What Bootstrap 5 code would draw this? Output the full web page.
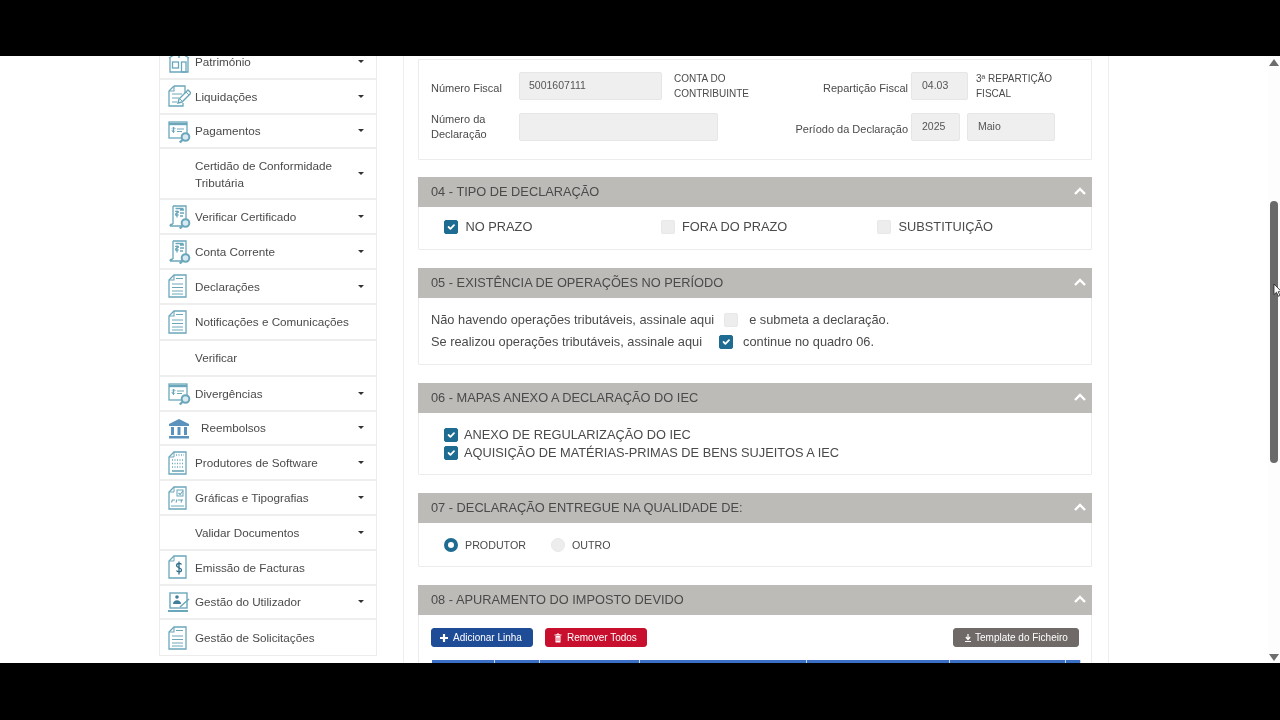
<!DOCTYPE html>
<html lang="pt">
<head>
<meta charset="utf-8">
<title>Declaração IEC</title>
<link href="https://cdn.jsdelivr.net/npm/bootstrap@5.3.0/dist/css/bootstrap.min.css" rel="stylesheet">
<style>
html,body{height:720px;overflow:hidden;background:#000}
body{font-family:"Liberation Sans",Arial,sans-serif;color:#4a4a4a;font-size:12.8px}
.bar{height:56px;background:#000}
.bar-b{height:57px;background:#000}
.page{height:607px;background:#fff;overflow:hidden;position:relative;filter:blur(.3px)}
.side{width:218px;margin-left:159px;margin-top:-11px;flex:none;border:1px solid #ececec;border-top:0;align-self:flex-start;border-radius:0}
.side .list-group-item{height:34.8px;padding:0 12px 0 7px;border:0;border-bottom:2px solid #eeeeee;font-size:11.7px;color:#4a4a4a;display:flex;align-items:center;line-height:17px;border-radius:0;background:#fff}
.side .list-group-item.mid{height:36px}
.side .list-group-item.tall{height:51px}
.side .list-group-item.last{border-bottom:0}
.ico{width:24px;height:24px;flex:none;margin-right:4px;color:#6ba7bb}
.ico.bank{color:#5c93bd}
.spc{width:24px;flex:none;margin-right:4px}
.ml6{margin-left:6px}
.side .dropdown-toggle{margin-left:auto;flex:none;color:#333;font-size:11.5px;line-height:0}
.side .dropdown-toggle::after{margin:0;display:block}
.panel{width:706px;margin-left:26px;flex:none;border-left:1px solid #eee;border-right:1px solid #eee;padding:3px 16px 0 14px;height:607px;overflow:hidden}
.sec{border:1px solid #ececec;border-radius:1px;margin-bottom:18px;background:#fff}
.sec-h{height:30px;background:#bdbbb8;padding:0 5px 0 13px;display:flex;align-items:center;justify-content:space-between;color:#4a4a4a;font-size:12.8px;margin:-1px -1px 0}
.chev{width:14px;height:9px;color:#fff;flex:none;margin-bottom:2px}
.top{height:101px;padding:11px 13px 0 12px;font-size:11px;line-height:15px;margin-bottom:17px}
.f-row{height:29px;margin-bottom:12px}
.lab1{width:88px;flex:none}
.pt6{padding-top:6px}
.fake{background:#efefef;border:1px solid #e6e6e6;border-radius:2px;height:28px;padding:0 9px;font-size:10.5px;color:#555;display:flex;align-items:center;min-height:0;box-shadow:none}
.w143{width:143px;flex:none}.w199{width:199px;flex:none}.w57{width:57px;flex:none;padding-left:10px}.w49{width:49px;flex:none;padding-left:10px}.w88{width:88px;flex:none;padding-left:10px}
.txt1{margin-left:12px;width:100px;flex:none;font-size:10px}
.lab-r1{width:134px;text-align:right;margin-right:3px;flex:none}
.lab-r2{width:190px;text-align:right;margin-right:3px;flex:none}
.txt2{margin-left:8px;width:92px;flex:none;font-size:10px}
.gap7{margin-left:7px}
.form-check-input.c{width:14px;height:14px;margin:0;flex:none;background-color:#ededed;border:1px solid #e8e8e8;border-radius:2px;opacity:1}
.form-check-input.c:checked{background-color:#1f6c92;border-color:#1f6c92}
.form-check-input.c[type=radio]{border-radius:50%}
.form-check-input.c[type=radio]:checked{background-image:none;background-color:#fff;border:4.5px solid #1f6c92}
.form-check-input.c.m-a{margin:0 11px 0 10px}
.form-check-input.c.m-b{margin:0 10px 0 17px}
.b04{height:42px;padding:0 0 2px 25px;display:flex;align-items:center}
.b04 .opt{width:216.500px;flex:none;display:flex;align-items:center;gap:7.500px}
.b05{height:66px;padding:11px 12px 0;line-height:22px}
.b05 .ln{display:flex;align-items:center;height:22px}
.b06{height:61px;padding:13px 0 0 25px;line-height:18px}
.b06 .ln{display:flex;align-items:center;height:18px;gap:6px}
.b07{height:43px;padding:2px 0 0 25px;display:flex;align-items:center;font-size:10.7px}
.b07 .opt{display:flex;align-items:center;gap:7px}
.b07 .opt+.opt{margin-left:25px}
.b08{padding:13px 12px 0 12px}
.btnx{height:19px;font-size:10px;padding:0 0 0 7px;line-height:17px;border-radius:3px;color:#fff;display:inline-flex;align-items:center;gap:4px;white-space:nowrap;--bs-btn-active-color:#fff}
.btn-a{background:#1f4c96;border:1px solid #1f4c96;width:102px}
.btn-r{background:#c8102e;border:1px solid #c8102e;width:102px;margin-left:12px}
.btn-t{background:#6f6a67;border:1px solid #6f6a67;width:126px;padding-left:9px;gap:2px}
.ib{width:10px;height:10px;flex:none}
.tbl{margin-top:13px;margin-left:1px;margin-bottom:0;table-layout:fixed;width:648px;--bs-table-bg:transparent}
.tbl th{background:#3b6fc6;height:30px;padding:0;border:0;border-right:1px solid #cfd9ee}
.c1{width:62px}.c2{width:45px}.c3{width:100px}.c4{width:167px}.c5{width:143px}.c6{width:116px}.c7{width:15px}
.sb{width:12px;height:607px;flex:none;margin-left:auto;background:#fdfdfd;display:flex;flex-direction:column;align-items:center}
.arr{width:10px;height:7px;color:#6d6d6d;flex:none}
.arr.up{margin-top:3px}
.thumb{width:8px;height:262px;background:#6a6a6a;border-radius:4px;margin-top:135px;flex:none}
.arr.dn{margin-top:auto;margin-bottom:2px}
.cursor{position:absolute;left:1273px;top:227px;width:9px;height:14px}
</style>
</head>
<body>
<svg width="0" height="0" class="d-block" aria-hidden="true">
<defs>
<g id="mag"><circle cx="18.500" cy="18" r="3.800" fill="#d9ebf2" stroke="currentColor" stroke-width="2"/><path d="M15.600 20.800l-2.800 2.800" stroke="currentColor" stroke-width="2.200"/></g>
<symbol id="i-house" viewBox="0 0 24 24"><path d="M2 9l10-6 10 6M3 9v14h18V9" fill="none" stroke="currentColor" stroke-width="1.300"/><rect x="5.500" y="13" width="6" height="6" fill="none" stroke="currentColor" stroke-width="1.300"/><rect x="14.500" y="13" width="4.500" height="10" fill="none" stroke="currentColor" stroke-width="1.300"/><circle cx="12" cy="8" r="1" fill="currentColor"/></symbol>
<symbol id="i-edit" viewBox="0 0 24 24"><path d="M7 2h11v9M7 2L2 7v15h14v-3" fill="none" stroke="currentColor" stroke-width="1.300"/><path d="M7 2v5H2M5 10h10M5 14h7M5 18h5" fill="none" stroke="currentColor" stroke-width="1.100"/><path d="M11 19l1-4 9-9 3 3-9 9z" fill="#fff" stroke="currentColor" stroke-width="1.400"/><path d="M19 8l3 3M13 15l2 2" stroke="currentColor" stroke-width="1"/></symbol>
<symbol id="i-pay" viewBox="0 0 24 24"><rect x="2" y="3" width="18" height="16" fill="none" stroke="currentColor" stroke-width="1.300"/><path d="M2 5h18" stroke="currentColor" stroke-width="2.400"/><path d="M5 9.500c0-1 3-1 3 0s-3 1-3 2.300 3 1 3 0M6.500 8v6M10 10h7M10 12.500h5" fill="none" stroke="currentColor" stroke-width="1"/><use href="#mag"/></symbol>
<symbol id="i-cert" viewBox="0 0 24 24"><path d="M6 1h13v14M6 1v18M3 21h12M6 19c-2 0-3 1-3 2" fill="none" stroke="currentColor" stroke-width="1.300"/><path d="M8.500 7c0-1 3-1 3 0s-3 1-3 2.500 3 1 3 0M10 5.500v7M13 5h4M13 8h4M13 11h3M8.500 3.500h8" fill="none" stroke="currentColor" stroke-width="1.300"/><use href="#mag"/></symbol>
<symbol id="i-doc" viewBox="0 0 24 24"><path d="M7 1h12v22H2V6z" fill="none" stroke="currentColor" stroke-width="1.300"/><path d="M7 1v5H2M9 4.500h7M5 10h11M5 13.500h11M5 17h11M5 20h11" fill="none" stroke="currentColor" stroke-width="1.100"/></symbol>
<symbol id="i-bank" viewBox="0 0 24 24"><path d="M12 3l10 5v2H2V8z" fill="currentColor"/><path d="M4 11h3v8H4zM10.500 11h3v8h-3zM17 11h3v8h-3zM2 20h20v2.500H2z" fill="currentColor"/></symbol>
<symbol id="i-soft" viewBox="0 0 24 24"><path d="M7 1h12v22H2V6z" fill="none" stroke="currentColor" stroke-width="1.300"/><path d="M7 1v5H2" fill="none" stroke="currentColor"/><path d="M9 4h8M5 9h12M5 12.500h12M5 16h12" fill="none" stroke="currentColor" stroke-width="1.400" stroke-dasharray="1 1.500"/><path d="M5 20h12" stroke="currentColor" stroke-width="1.600"/></symbol>
<symbol id="i-graf" viewBox="0 0 24 24"><path d="M7 1h12v22H2V6z" fill="none" stroke="currentColor" stroke-width="1.300"/><path d="M7 1v5H2" fill="none" stroke="currentColor"/><rect x="10" y="4" width="6" height="6" fill="none" stroke="currentColor"/><path d="M11.500 7l1.500 1.500 3-3.500M5 14h3M4.500 16.500l1-3M9 16.500l1-3M14 16.500l1-3M11 14h5M4 20h13" fill="none" stroke="currentColor" stroke-width="1.100"/></symbol>
<symbol id="i-fact" viewBox="0 0 24 24"><path d="M7 1h12v22H2V6z" fill="none" stroke="currentColor" stroke-width="1.300"/><path d="M7 1v5H2" fill="none" stroke="currentColor"/><path d="M14.500 9.500c-1-1.500-5-1.500-5 1s5 2 5 4.500-4 2.500-5 .5M12 6.500v13" fill="none" stroke="#2d6c88" stroke-width="1.300"/></symbol>
<symbol id="i-user" viewBox="0 0 24 24"><rect x="3" y="3" width="17" height="15" fill="none" stroke="currentColor" stroke-width="1.400"/><path d="M1 21h20" stroke="currentColor" stroke-width="2"/><circle cx="10" cy="7" r="1.800" fill="#3f7f9c"/><path d="M6 14c0-5 8-5 8 0z" fill="#3f7f9c"/><path d="M13 17l9-8" stroke="currentColor" stroke-width="1.500"/></symbol>
</defs>
</svg>
<div class="bar"></div>
<div class="page d-flex">
  <div class="side list-group">
    <div class="list-group-item"><svg class="ico"><use href="#i-house"/></svg><span>Património</span><span class="dropdown-toggle"></span></div>
    <div class="list-group-item"><svg class="ico"><use href="#i-edit"/></svg><span>Liquidações</span><span class="dropdown-toggle"></span></div>
    <div class="list-group-item"><svg class="ico"><use href="#i-pay"/></svg><span>Pagamentos</span><span class="dropdown-toggle"></span></div>
    <div class="list-group-item tall"><span class="spc"></span><span>Certidão de Conformidade<br>Tributária</span><span class="dropdown-toggle"></span></div>
    <div class="list-group-item"><svg class="ico"><use href="#i-cert"/></svg><span>Verificar Certificado</span><span class="dropdown-toggle"></span></div>
    <div class="list-group-item"><svg class="ico"><use href="#i-cert"/></svg><span>Conta Corrente</span><span class="dropdown-toggle"></span></div>
    <div class="list-group-item"><svg class="ico"><use href="#i-doc"/></svg><span>Declarações</span><span class="dropdown-toggle"></span></div>
    <div class="list-group-item mid"><svg class="ico"><use href="#i-doc"/></svg><span>Notificações e Comunicações</span></div>
    <div class="list-group-item mid"><span class="spc"></span><span>Verificar</span></div>
    <div class="list-group-item"><svg class="ico"><use href="#i-pay"/></svg><span>Divergências</span><span class="dropdown-toggle"></span></div>
    <div class="list-group-item"><svg class="ico bank"><use href="#i-bank"/></svg><span class="ml6">Reembolsos</span><span class="dropdown-toggle"></span></div>
    <div class="list-group-item"><svg class="ico"><use href="#i-soft"/></svg><span>Produtores de Software</span><span class="dropdown-toggle"></span></div>
    <div class="list-group-item"><svg class="ico"><use href="#i-graf"/></svg><span>Gráficas e Tipografias</span><span class="dropdown-toggle"></span></div>
    <div class="list-group-item"><span class="spc"></span><span>Validar Documentos</span><span class="dropdown-toggle"></span></div>
    <div class="list-group-item"><svg class="ico"><use href="#i-fact"/></svg><span>Emissão de Facturas</span></div>
    <div class="list-group-item"><svg class="ico"><use href="#i-user"/></svg><span>Gestão do Utilizador</span><span class="dropdown-toggle"></span></div>
    <div class="list-group-item last"><svg class="ico"><use href="#i-doc"/></svg><span>Gestão de Solicitações</span></div>
  </div>

  <div class="panel">
    <div class="sec top">
      <div class="d-flex align-items-center f-row">
        <span class="lab1 pt6">Número Fiscal</span>
        <div class="fake w143">5001607111</div>
        <span class="txt1">CONTA DO CONTRIBUINTE</span>
        <span class="lab-r1 pt6">Repartição Fiscal</span>
        <div class="fake w57">04.03</div>
        <span class="txt2">3ª REPARTIÇÃO FISCAL</span>
      </div>
      <div class="d-flex align-items-center f-row">
        <span class="lab1">Número da Declaração</span>
        <div class="fake w199"></div>
        <span class="lab-r2 pt6">Período da Declaração</span>
        <div class="fake w49">2025</div>
        <div class="fake w88 gap7">Maio</div>
      </div>
    </div>

    <div class="sec">
      <div class="sec-h"><span>04 - TIPO DE DECLARAÇÃO</span><svg class="chev" viewBox="0 0 14 9"><path d="M2 7l5-5 5 5" fill="none" stroke="currentColor" stroke-width="2.400"/></svg></div>
      <div class="b04">
        <label class="opt"><input class="form-check-input c" type="checkbox" checked> NO PRAZO</label>
        <label class="opt"><input class="form-check-input c" type="checkbox"> FORA DO PRAZO</label>
        <label class="opt"><input class="form-check-input c" type="checkbox"> SUBSTITUIÇÃO</label>
      </div>
    </div>

    <div class="sec">
      <div class="sec-h"><span>05 - EXISTÊNCIA DE OPERAÇÕES NO PERÍODO</span><svg class="chev" viewBox="0 0 14 9"><path d="M2 7l5-5 5 5" fill="none" stroke="currentColor" stroke-width="2.400"/></svg></div>
      <div class="b05">
        <div class="ln"><span>Não havendo operações tributáveis, assinale aqui</span><input class="form-check-input c m-a" type="checkbox"><span>e submeta a declaração.</span></div>
        <div class="ln"><span>Se realizou operações tributáveis, assinale aqui</span><input class="form-check-input c m-b" type="checkbox" checked><span>continue no quadro 06.</span></div>
      </div>
    </div>

    <div class="sec">
      <div class="sec-h"><span>06 - MAPAS ANEXO A DECLARAÇÃO DO IEC</span><svg class="chev" viewBox="0 0 14 9"><path d="M2 7l5-5 5 5" fill="none" stroke="currentColor" stroke-width="2.400"/></svg></div>
      <div class="b06">
        <label class="ln"><input class="form-check-input c" type="checkbox" checked> ANEXO DE REGULARIZAÇÃO DO IEC</label>
        <label class="ln"><input class="form-check-input c" type="checkbox" checked> AQUISIÇÃO DE MATÉRIAS-PRIMAS DE BENS SUJEITOS A IEC</label>
      </div>
    </div>

    <div class="sec">
      <div class="sec-h"><span>07 - DECLARAÇÃO ENTREGUE NA QUALIDADE DE:</span><svg class="chev" viewBox="0 0 14 9"><path d="M2 7l5-5 5 5" fill="none" stroke="currentColor" stroke-width="2.400"/></svg></div>
      <div class="b07">
        <label class="opt"><input class="form-check-input c" type="radio" name="q" checked> PRODUTOR</label>
        <label class="opt"><input class="form-check-input c" type="radio" name="q2"> OUTRO</label>
      </div>
    </div>

    <div class="sec mb-0">
      <div class="sec-h"><span>08 - APURAMENTO DO IMPOSTO DEVIDO</span><svg class="chev" viewBox="0 0 14 9"><path d="M2 7l5-5 5 5" fill="none" stroke="currentColor" stroke-width="2.400"/></svg></div>
      <div class="b08">
        <div class="d-flex align-items-center">
          <button type="button" class="btn btnx btn-a"><svg class="ib" viewBox="0 0 10 10"><path d="M5 1v8M1 5h8" stroke="#fff" stroke-width="2.200"/></svg>Adicionar Linha</button>
          <button type="button" class="btn btnx btn-r me-auto"><svg class="ib" viewBox="0 0 10 10"><path d="M1.500 2h7M4 2V1h2v1" fill="none" stroke="#fff"/><path d="M2.500 3h5v6.500h-5z" fill="#fff"/><path d="M4 4.500v3.500M6 4.500v3.500" stroke="#c8102e" stroke-width=".7"/></svg>Remover Todos</button>
          <button type="button" class="btn btnx btn-t"><svg class="ib" viewBox="0 0 10 10"><path d="M5 1v4.500M2.800 4L5 6.500 7.200 4M2 8.500h6" fill="none" stroke="#fff" stroke-width="1.200"/></svg>Template do Ficheiro</button>
        </div>
        <table class="table tbl">
          <thead><tr><th class="c1"></th><th class="c2"></th><th class="c3"></th><th class="c4"></th><th class="c5"></th><th class="c6"></th><th class="c7"></th></tr></thead>
        </table>
      </div>
    </div>
  </div>

  <div class="sb">
    <svg class="arr up" viewBox="0 0 10 7"><path d="M5 0l5 7H0z" fill="currentColor"/></svg>
    <div class="thumb"></div>
    <svg class="arr dn" viewBox="0 0 10 7"><path d="M5 7L0 0h10z" fill="currentColor"/></svg>
  </div>
  <svg class="cursor" viewBox="0 0 9 14"><path d="M1 1v10.500l2.500-2.200 1.800 4 1.700-.8-1.800-3.800H8.500z" fill="#fff" stroke="#222" stroke-width=".8"/></svg>
</div>
<div class="bar-b"></div>
<script src="https://cdn.jsdelivr.net/npm/bootstrap@5.3.0/dist/js/bootstrap.bundle.min.js"></script>
</body>
</html>
